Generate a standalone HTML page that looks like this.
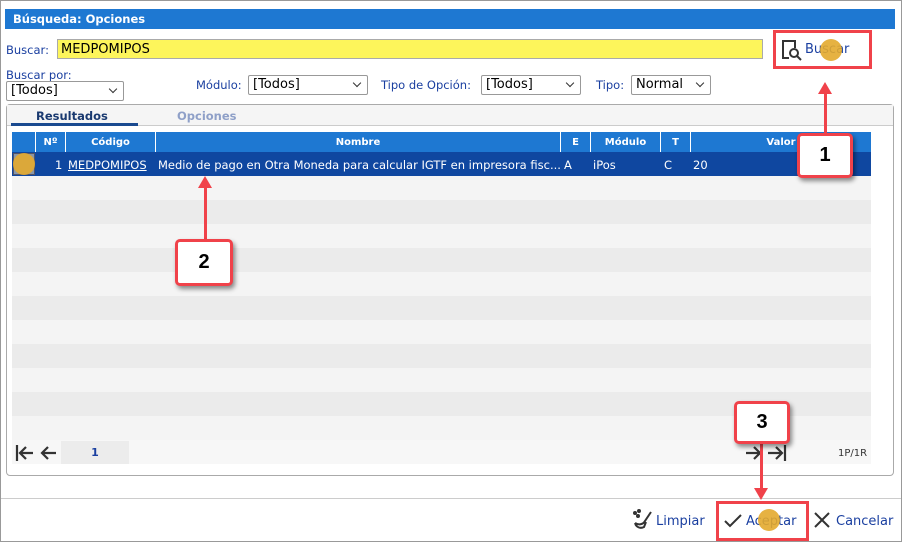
<!DOCTYPE html>
<html><head><meta charset="utf-8"><style>
*{box-sizing:border-box;margin:0;padding:0}
body{width:902px;height:542px;background:#fff;font-family:"DejaVu Sans","Liberation Sans",sans-serif;font-size:12px;position:relative;overflow:hidden}
.a{position:absolute}
.lbl{color:#1a3fa0;font-size:11.5px}
.sel{position:absolute;height:20px;border:1px solid #999;border-radius:2px;background:#fff;font-size:13px;padding:1px 4px;color:#000}
.sel:after{content:"";position:absolute;right:7px;top:4px;width:5px;height:5px;border-right:1.5px solid #333;border-bottom:1.5px solid #333;transform:rotate(45deg)}
.th{position:absolute;top:132px;height:20px;color:#fff;font-weight:bold;font-size:10px;text-align:center;line-height:21px;border-left:1px solid #fff}
.td{position:absolute;top:153px;height:24px;line-height:24px;color:#fff;font-size:11.5px}
.box{position:absolute;background:#fff;border:3px solid #f0424a;border-radius:5px;box-shadow:2px 3px 5px rgba(0,0,0,.45);font:bold 20px "Liberation Sans",sans-serif;text-align:center}
.ln{position:absolute;background:#f0424a;width:3px}
.dot{position:absolute;width:22px;height:22px;border-radius:50%;background:#e3aa2e;opacity:.9}
</style></head><body>
<div class="a" style="left:0;top:0;width:902px;height:542px;border:1px solid #999"></div>
<div class="a" style="left:5px;top:9px;width:890px;height:20px;background:#1e78d2;color:#fff;font-weight:bold;font-size:11.5px;line-height:21px;padding-left:8px">Búsqueda: Opciones</div>
<div class="a lbl" style="left:6px;top:43px">Buscar:</div>
<div class="a" style="left:57px;top:39px;width:706px;height:20px;background:#fdf55b;border:1px solid #aaa;font-size:13px;padding-left:3px;line-height:19px">MEDPOMIPOS</div>
<svg class="a" style="left:780px;top:38px" width="24" height="24" viewBox="0 0 24 24" fill="none" stroke="#333" stroke-width="2"><path d="M9 20H3V3h12v7"/><circle cx="14" cy="15" r="4"/><path d="M17 18l4 4"/></svg>
<div class="a lbl" style="left:805px;top:42px;font-size:13px">Buscar</div>
<div class="a lbl" style="left:6px;top:68px">Buscar por:</div>
<div class="sel" style="left:6px;top:81px;width:118px">[Todos]</div>
<div class="a lbl" style="left:196px;top:78px">Módulo:</div>
<div class="sel" style="left:248px;top:75px;width:120px">[Todos]</div>
<div class="a lbl" style="left:381px;top:78px">Tipo de Opción:</div>
<div class="sel" style="left:481px;top:75px;width:100px">[Todos]</div>
<div class="a lbl" style="left:596px;top:78px">Tipo:</div>
<div class="sel" style="left:631px;top:75px;width:80px">Normal</div>
<div class="a" style="left:6px;top:104px;width:888px;height:372px;border:1px solid #aaa;border-radius:4px;background:#fff"></div>
<div class="a" style="left:7px;top:105px;width:886px;height:21px;background:#f5f5f5;border-bottom:1px solid #ccc"></div>
<div class="a" style="left:36px;top:109px;font-weight:bold;font-size:11.5px;color:#1a3a70">Resultados</div>
<div class="a" style="left:11px;top:123px;width:127px;height:3px;background:#1a4a90"></div>
<div class="a" style="left:177px;top:109px;font-weight:bold;font-size:11.5px;color:#8fa0c8">Opciones</div>
<div class="a" style="left:12px;top:132px;width:859px;height:20px;background:#1e78d2"></div>
<div class="th" style="left:35px;width:30px">Nº</div>
<div class="th" style="left:65px;width:90px">Código</div>
<div class="th" style="left:155px;width:405px">Nombre</div>
<div class="th" style="left:560px;width:30px">E</div>
<div class="th" style="left:590px;width:70px">Módulo</div>
<div class="th" style="left:660px;width:30px">T</div>
<div class="th" style="left:690px;width:181px">Valor</div>
<div class="a" style="left:12px;top:152px;width:859px;height:24px;background:#0f47a0"></div>
<div class="a" style="left:13px;top:153px;width:22px;height:22px;background:#8a96a8;border:1px solid #556"></div>
<div class="dot" style="left:13px;top:153px"></div>
<div class="td" style="left:55px">1</div>
<div class="td" style="left:68px;text-decoration:underline">MEDPOMIPOS</div>
<div class="td" style="left:158px">Medio de pago en Otra Moneda para calcular IGTF en impresora fisc...</div>
<div class="td" style="left:564px">A</div>
<div class="td" style="left:593px">iPos</div>
<div class="td" style="left:664px">C</div>
<div class="td" style="left:693px">20</div>
<div class="a" style="left:12px;top:176px;width:859px;height:264px;background:repeating-linear-gradient(#f4f4f4 0 24px,#ebebeb 24px 48px)"></div>
<div class="a" style="left:12px;top:440px;width:859px;height:24px;background:#f7f7f7"></div>
<div class="a" style="left:61px;top:441px;width:68px;height:23px;background:#ececec;text-align:center;line-height:23px;color:#1a3fa0;font-weight:bold;font-size:11px">1</div>
<svg class="a" style="left:14px;top:443px" width="44" height="20" viewBox="0 0 44 20" fill="none" stroke="#333" stroke-width="2.2"><path d="M3 2v16M6 10h13M12 4l-6 6 6 6M28 10h14M34 4l-6 6 6 6"/></svg>
<svg class="a" style="left:744px;top:443px" width="44" height="20" viewBox="0 0 44 20" fill="none" stroke="#333" stroke-width="2.2"><path d="M2 10h14M10 4l6 6-6 6M24 10h14M32 4l6 6-6 6M41 2v16"/></svg>
<div class="a" style="left:838px;top:448px;font-size:10px;color:#333">1P/1R</div>
<div class="a" style="left:1px;top:498px;width:900px;height:1px;background:#ccc"></div>
<svg class="a" style="left:632px;top:509px" width="22" height="22" viewBox="0 0 22 22" fill="none" stroke="#333" stroke-width="2"><path d="M3 14c3 2 8 2 10-2l6-9M3 14c1 4 5 6 9 4l2-5"/><circle cx="3" cy="4" r="1" fill="#333"/><circle cx="7" cy="2" r="1" fill="#333"/><circle cx="6" cy="7" r="1" fill="#333"/></svg>
<div class="a lbl" style="left:656px;top:514px;font-size:13px">Limpiar</div>
<svg class="a" style="left:723px;top:512px" width="20" height="18" viewBox="0 0 20 18" fill="none" stroke="#333" stroke-width="2"><path d="M2 9l5 5L18 3"/></svg>
<div class="a lbl" style="left:746px;top:514px;font-size:13px">Aceptar</div>
<svg class="a" style="left:813px;top:511px" width="18" height="18" viewBox="0 0 18 18" fill="none" stroke="#333" stroke-width="2"><path d="M2 2l14 14M16 2L2 16"/></svg>
<div class="a lbl" style="left:836px;top:514px;font-size:13px">Cancelar</div>
<div class="a" style="left:773px;top:30px;width:99px;height:39px;border:3px solid #f0424a"></div>
<div class="a" style="left:716px;top:501px;width:93px;height:40px;border:3px solid #f0424a"></div>
<div class="dot" style="left:820px;top:39px"></div>
<div class="dot" style="left:758px;top:509px"></div>
<div class="ln" style="left:824px;top:92px;height:42px"></div>
<div class="a" style="left:818px;top:82px;border-left:7px solid transparent;border-right:7px solid transparent;border-bottom:12px solid #f0424a"></div>
<div class="box" style="left:797px;top:133px;width:56px;height:45px;line-height:39px">1</div>
<div class="ln" style="left:204px;top:186px;height:54px"></div>
<div class="a" style="left:198px;top:176px;border-left:7px solid transparent;border-right:7px solid transparent;border-bottom:12px solid #f0424a"></div>
<div class="box" style="left:175px;top:239px;width:58px;height:47px;line-height:41px">2</div>
<div class="ln" style="left:760px;top:442px;height:48px"></div>
<div class="a" style="left:754px;top:488px;border-left:7px solid transparent;border-right:7px solid transparent;border-top:12px solid #f0424a"></div>
<div class="box" style="left:734px;top:401px;width:56px;height:43px;line-height:37px">3</div>
</body></html>
